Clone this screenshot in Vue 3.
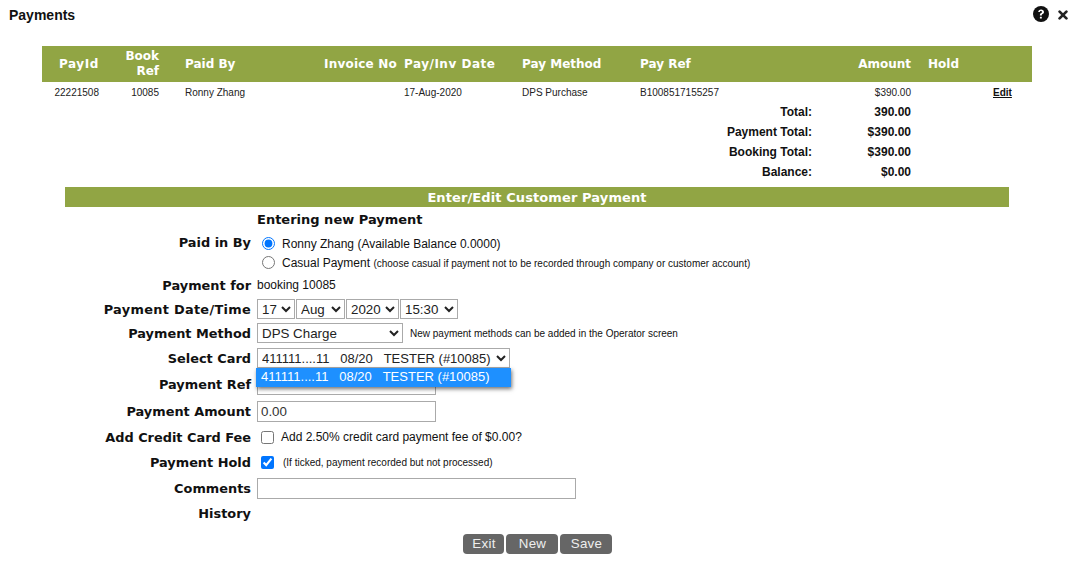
<script setup>
const columns = [
  { key: 'payId', label: 'PayId', cls: 'c1 right' },
  { key: 'book', label: 'Book Ref', cls: 'c2 right' },
  { key: 'by', label: 'Paid By', cls: 'c3' },
  { key: 'inv', label: 'Invoice No', cls: 'c4 right' },
  { key: 'date', label: 'Pay/Inv Date', cls: 'c5' },
  { key: 'method', label: 'Pay Method', cls: 'c6' },
  { key: 'ref', label: 'Pay Ref', cls: 'c7' },
  { key: 'amount', label: 'Amount', cls: 'c8 right' },
  { key: 'hold', label: 'Hold', cls: 'c9' },
  { key: 'edit', label: '', cls: 'c10' }
]
const row = {
  payId: '22221508', book: '10085', by: 'Ronny Zhang', inv: '', date: '17-Aug-2020',
  method: 'DPS Purchase', ref: 'B1008517155257', amount: '$390.00', hold: ''
}
const totals = [
  ['Total:', '390.00'],
  ['Payment Total:', '$390.00'],
  ['Booking Total:', '$390.00'],
  ['Balance:', '$0.00']
]
const card = '411111....11\u00a0\u00a0\u00a008/20\u00a0\u00a0\u00a0TESTER (#10085)'
</script>

<template>
  <div class="page">
    <header class="top">
      <h1 class="title">Payments</h1>
      <div class="tools">
        <svg class="help" viewBox="0 0 16 16" width="16" height="16" aria-label="Help">
          <circle cx="8" cy="8" r="8" fill="#111" />
          <path d="M5.2 6.1C5.3 4.4 6.5 3.5 8.1 3.5c1.7 0 2.9 1 2.9 2.4 0 1.1-.6 1.7-1.4 2.2-.6.4-.8.6-.8 1.2v.3H6.9v-.5c0-1 .4-1.5 1.1-2 .6-.4 1-.7 1-1.2s-.4-.8-1-.8c-.7 0-1.1.4-1.1 1z" fill="#fff" />
          <rect x="6.9" y="10.7" width="1.9" height="1.9" rx=".3" fill="#fff" />
        </svg>
        <svg class="close" viewBox="0 0 10 10" width="10" height="10" aria-label="Close">
          <path d="M1.6 1.6 8.4 8.4M8.4 1.6 1.6 8.4" stroke="#222" stroke-width="2.7" stroke-linecap="round" />
        </svg>
      </div>
    </header>

    <table class="pay-table">
      <colgroup>
        <col v-for="c in columns" :key="c.key" :class="c.cls" />
      </colgroup>
      <thead>
        <tr>
          <th v-for="c in columns" :key="c.key" :class="c.cls">{{ c.label }}</th>
        </tr>
      </thead>
      <tbody>
        <tr class="data">
          <td v-for="c in columns.slice(0, 9)" :key="c.key" :class="c.cls">{{ row[c.key] }}</td>
          <td class="c10"><a class="edit" href="#">Edit</a></td>
        </tr>
        <tr v-for="t in totals" :key="t[0]" class="total">
          <td colspan="7" class="right">{{ t[0] }}</td>
          <td class="right">{{ t[1] }}</td>
          <td colspan="2"></td>
        </tr>
      </tbody>
    </table>

    <section class="entry">
      <h2 class="bar">Enter/Edit Customer Payment</h2>
      <div class="form">
        <div class="line h-entering"><strong class="heading">Entering new Payment</strong></div>

        <div class="line h-paid">
          <span class="lab">Paid in By</span>
          <div class="radios">
            <label class="radio r1"><input type="radio" name="by" checked /> <span>Ronny Zhang (Available Balance 0.0000)</span></label>
            <label class="radio r2"><input type="radio" name="by" /> <span>Casual Payment <small>(choose casual if payment not to be recorded through company or customer account)</small></span></label>
          </div>
        </div>

        <div class="line h-for"><span class="lab">Payment for</span><span class="val">booking 10085</span></div>

        <div class="line h-date">
          <span class="lab">Payment Date/Time</span>
          <div class="selects">
            <select class="s-day"><option>17</option></select>
            <select class="s-mon"><option>Aug</option></select>
            <select class="s-year"><option>2020</option></select>
            <select class="s-time"><option>15:30</option></select>
          </div>
        </div>

        <div class="line h-method">
          <span class="lab">Payment Method</span>
          <select class="s-method"><option>DPS Charge</option></select>
          <small class="note">New payment methods can be added in the Operator screen</small>
        </div>

        <div class="line h-card">
          <span class="lab">Select Card</span>
          <div class="card-wrap">
            <select class="s-card"><option>{{ card }}</option></select>
            <div class="popup">{{ card }}</div>
          </div>
        </div>

        <div class="line h-ref"><span class="lab">Payment Ref</span><input class="text short" type="text" /></div>
        <div class="line h-amount"><span class="lab">Payment Amount</span><input class="text short" type="text" value="0.00" /></div>

        <div class="line h-fee">
          <span class="lab">Add Credit Card Fee</span>
          <label class="check"><input type="checkbox" /> <span>Add 2.50% credit card payment fee of $0.00?</span></label>
        </div>

        <div class="line h-hold">
          <span class="lab">Payment Hold</span>
          <label class="check"><input type="checkbox" checked /> <small class="hold-note">(If ticked, payment recorded but not processed)</small></label>
        </div>

        <div class="line h-comments"><span class="lab">Comments</span><input class="text long" type="text" /></div>
        <div class="line h-history"><span class="lab">History</span></div>
      </div>

      <div class="buttons">
        <button class="btn b-exit" type="button">Exit</button>
        <button class="btn b-new" type="button">New</button>
        <button class="btn b-save" type="button">Save</button>
      </div>
    </section>
  </div>
</template>

<style>
html, body { background: #fff; }
</style>

<style scoped>
.page {
  width: 1075px;
  height: 581px;
  overflow: hidden;
  background: #fff;
  color: #111;
  font-family: "Liberation Sans", Arial, sans-serif;
  box-sizing: border-box;
}
.top {
  height: 46px;
  display: flex;
  justify-content: space-between;
  align-items: flex-start;
  padding: 6px 7px 0 9px;
  box-sizing: border-box;
}
.title {
  margin: 0;
  font-size: 14px;
  line-height: 18px;
  font-weight: 700;
}
.tools { display: flex; align-items: center; gap: 9px; }
.help, .close { display: block; }
.close { margin-top: 1px; }

.pay-table {
  margin-left: 42px;
  width: 990px;
  table-layout: fixed;
  border-collapse: collapse;
  font-size: 10px;
}
col.c1 { width: 57px; }
col.c2 { width: 60px; }
col.c3 { width: 165px; }
col.c4 { width: 73px; }
col.c5 { width: 125px; }
col.c6 { width: 118px; }
col.c7 { width: 172px; }
col.c8 { width: 99px; }
col.c9 { width: 81px; }
col.c10 { width: 40px; }
th, td { padding: 0; text-align: left; font-weight: 400; }
.right { text-align: right; }
thead tr { background: #91a544; height: 36px; }
th {
  color: #fff;
  font-family: "DejaVu Sans", Verdana, sans-serif;
  font-size: 12px;
  font-weight: 700;
  line-height: 15px;
}
th.c1 { letter-spacing: 0.6px; }
th.c4 { letter-spacing: 0.2px; }
th.c5 { letter-spacing: 0.5px; }
th.c3, td.c3 { padding-left: 26px; }
th.c5, td.c5 { padding-left: 7px; }
th.c9 { padding-left: 17px; }
.data { height: 20px; }
.data td { color: #222; }
td.c10 { text-align: left; padding-left: 1px; }
.edit { color: #111; font-weight: 700; font-size: 10px; text-decoration: underline; }
th.c2 { padding-left: 20px; }
.total { height: 20px; font-size: 12px; font-weight: 700; }
.total td { font-weight: 700; }

.entry { margin-top: 5px; }
.bar {
  margin: 0 0 0 65px;
  width: 944px;
  height: 20px;
  background: #91a544;
  color: #fff;
  text-align: center;
  font-family: "DejaVu Sans", Verdana, sans-serif;
  font-size: 13px;
  line-height: 22px;
  font-weight: 700;
  letter-spacing: 0.1px;
}
.form { padding-top: 1px; }
.line {
  display: flex;
  align-items: center;
  padding-left: 65px;
}
.lab {
  width: 186px;
  margin-right: 6px;
  padding-top: 2px;
  flex: none;
  text-align: right;
  font-family: "DejaVu Sans", Verdana, sans-serif;
  font-size: 12.9px;
  font-weight: 700;
  line-height: 16px;
  white-space: nowrap;
}
.heading {
  margin-left: 192px;
  font-family: "DejaVu Sans", Verdana, sans-serif;
  font-size: 13px;
  font-weight: 700;
}
.h-entering { height: 23px; }
.h-paid { height: 42px; align-items: flex-start; }
.h-paid .lab { padding-top: 4px; }
.h-for { height: 24px; }
.h-date { height: 24px; }
.h-date .lab { letter-spacing: 0.3px; }
.h-method { height: 24px; }
.h-card { height: 26px; }
.h-ref { height: 26px; }
.h-amount { height: 28px; }
.h-fee { height: 24px; }
.h-hold { height: 26px; }
.h-comments { height: 26px; }
.h-history { height: 24px; }

.radios { display: flex; flex-direction: column; font-size: 12px; padding-left: 5px; }
.radio { display: flex; align-items: center; height: 20px; gap: 7px; }
.radio span { margin-top: 2px; }
.radio.r1 { margin-top: 2px; }
.radio.r2 { height: 18px; }
.radio input {
  margin: 0;
  width: 13px;
  height: 13px;
  accent-color: #0075ff;
}
small { font-size: 10px; }
.val { font-size: 12px; }

.selects { display: flex; gap: 1px; }
select {
  height: 20px;
  font-family: "Liberation Sans", Arial, sans-serif;
  font-size: 13.33px;
  color: #222;
  border: 1px solid #aaa;
  background-color: #fff;
  padding: 0;
  box-sizing: border-box;
  border-radius: 0;
}
.s-day { width: 38px; }
.s-mon { width: 49px; }
.s-year { width: 53px; }
.s-time { width: 58px; }
.s-method { width: 146px; }
.note { margin-left: 7px; font-size: 10px; }
.card-wrap { position: relative; height: 20px; }
.s-card { width: 253px; font-size: 13px; }
.popup {
  position: absolute;
  left: -1px;
  top: 20px;
  width: 255px;
  height: 19px;
  box-sizing: border-box;
  padding-left: 5px;
  background: #1e90ff;
  color: #fff;
  font-size: 13px;
  line-height: 18px;
  white-space: nowrap;
  box-shadow: 1px 2px 4px rgba(0, 0, 0, 0.55);
  z-index: 2;
}
.text {
  height: 21px;
  box-sizing: border-box;
  border: 1px solid #aaa;
  padding: 1px 3px;
  font-family: "Liberation Sans", Arial, sans-serif;
  font-size: 13.33px;
  color: #333;
  background: #fff;
  border-radius: 0;
}
.short { width: 179px; }
.long { width: 319px; }
.check { display: flex; align-items: center; font-size: 12px; padding-left: 4px; gap: 7px; }
.check input { margin: 0; width: 13px; height: 13px; accent-color: #0075ff; }
.hold-note { margin-left: 2px; font-size: 10px; }

.buttons { display: flex; justify-content: center; gap: 2px; margin-top: 9px; padding-right: 1px; }
.btn {
  height: 20px;
  border: none;
  border-radius: 4px;
  background: #666;
  color: #eee;
  font-family: "Liberation Sans", Arial, sans-serif;
  font-size: 13.33px;
  line-height: 18px;
  padding: 0 0 0 2px;
  box-sizing: border-box;
  letter-spacing: 0.3px;
}
.b-exit { width: 41px; }
.b-new { width: 52px; }
.b-save { width: 52px; }
</style>
